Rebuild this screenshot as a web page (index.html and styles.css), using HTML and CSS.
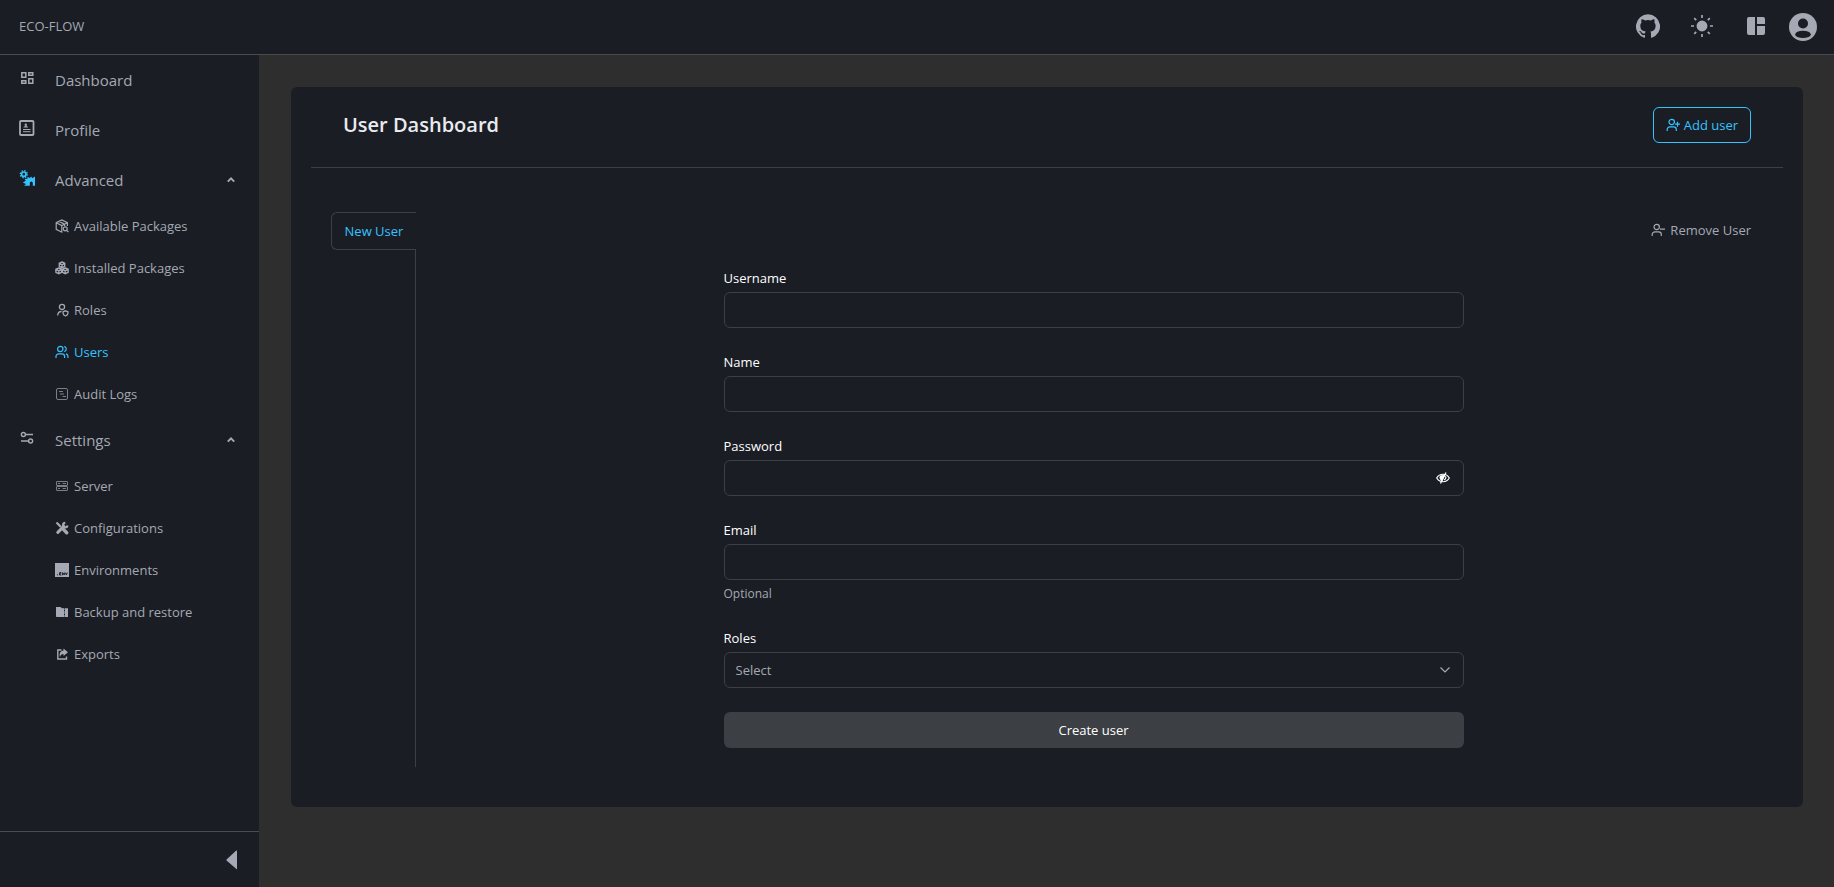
FILE: index.html
```html
<!DOCTYPE html>
<html lang="en">
<head>
<meta charset="utf-8">
<title>ECO-FLOW</title>
<link rel="stylesheet" href="styles.css">
</head>
<body>
<div class="app">
  <header class="topbar">
    <span class="brand">ECO-FLOW</span>
    <div class="tools">
      <a class="tool" href="#" aria-label="GitHub"><svg width="24" height="24" viewBox="0 0 24 24" fill="currentColor"><path d="M12 .3a12 12 0 0 0-3.8 23.4c.6.1.8-.3.8-.6v-2c-3.3.7-4-1.6-4-1.6-.6-1.4-1.400-1.800-1.400-1.800-1-.7.1-.7.1-.7 1.200 0 1.900 1.200 1.900 1.200 1 1.800 2.800 1.300 3.500 1 0-.8.4-1.300.7-1.600-2.700-.3-5.500-1.300-5.500-6 0-1.200.5-2.300 1.300-3.100-.2-.4-.6-1.600 0-3.200 0 0 1-.3 3.400 1.200a11.500 11.500 0 0 1 6 0c2.300-1.500 3.300-1.200 3.300-1.200.6 1.600.2 2.800 0 3.200.9.8 1.300 1.900 1.300 3.200 0 4.600-2.800 5.600-5.500 5.900.5.4.9 1 .9 2.200v3.300c0 .3.1.7.8.6A12 12 0 0 0 12 .3"/></svg></a>
      <button class="tool" type="button" aria-label="Theme"><svg width="24" height="24" viewBox="0 0 24 24" fill="currentColor" stroke="currentColor" stroke-width="1.700"><circle cx="12" cy="12" r="4.600"/><path d="M12 1v3M12 20v3M1 12h3M20 12h3M4.200 4.200l2 2M17.800 17.800l2 2M4.200 19.800l2-2M17.800 6.200l2-2"/></svg></button>
      <button class="tool" type="button" aria-label="Layout"><svg width="24" height="24" viewBox="0 0 24 24" fill="currentColor"><path d="M5 3h6v18H5a2 2 0 0 1-2-2V5a2 2 0 0 1 2-2zM13 3h6a2 2 0 0 1 2 2v5h-8zM13 12h8v7a2 2 0 0 1-2 2h-6z"/></svg></button>
      <button class="tool account" type="button" aria-label="Account"><svg width="28" height="28" viewBox="0 0 28 28"><circle cx="14" cy="14" r="14" fill="currentColor"/><circle cx="14" cy="10.500" r="5" class="cut"/><ellipse cx="14" cy="21.400" rx="7.800" ry="3.700" class="cut"/></svg></button>
    </div>
  </header>

  <div class="body">
    <aside class="sidebar">
      <nav class="nav">
        <a class="item" href="#"><svg class="lead" viewBox="0 0 16 16" fill="none" stroke="currentColor" stroke-width="1.500"><path d="M2.800 2.800h4v4.500h-4zM9.800 2.800h4v2.500h-4zM2.800 10.700h4v2.500h-4zM9.800 8.700h4v4.500h-4z"/></svg><span>Dashboard</span></a>
        <a class="item" href="#"><svg class="lead" viewBox="0 0 16 16" fill="none" stroke="currentColor"><rect x="1" y="1" width="13.500" height="14" rx="1" stroke-width="1.800"/><circle cx="6.800" cy="4.700" r="1.200" fill="currentColor" stroke="none"/><path d="M4.400 7.600c.4-2 4.400-2 4.800 0z" fill="currentColor" stroke="none"/><path d="M4 9.500h7.500M4 11.700h7.500"/></svg><span>Profile</span></a>
        <button class="item" type="button"><svg class="lead active" viewBox="0 0 16 16" fill="currentColor"><circle cx="4.800" cy="4.200" r="2.200" fill="none" stroke="currentColor" stroke-width="1.700"/><circle cx="4.800" cy="4.200" r="3.500" fill="none" stroke="currentColor" stroke-width="1.400" stroke-dasharray="1.400 1.350"/><path d="M8.500 6.800 10.800 8 12.200 6.500l1 1.800L16 6.500V15.800h-2.200v-2.700a1.500 1.500 0 0 0-3 0v2.700H5l2-1.800-3.200-1.500 3-1.700-1.300-1.900 3-.2z"/></svg><span>Advanced</span><svg class="caret" viewBox="0 0 10 10"><path d="M1.800 6.600 5 3.400l3.200 3.200" fill="none" stroke="currentColor" stroke-width="2"/></svg></button>
        <a class="sub" href="#"><svg viewBox="0 0 14 14" fill="none" stroke="currentColor" stroke-width="1.200"><path d="M7.500 13 6.800 13.200 1.200 10.300V3.700L6.800 1l5.600 2.700V7M1.200 3.700 6.800 6.500l5.600-2.800M6.800 6.500v6.700M4 2.400l5.600 2.800v2"/><circle cx="10.200" cy="9.800" r="2"/><path d="m11.700 11.300 1.800 1.900"/></svg><span>Available Packages</span></a>
        <a class="sub" href="#"><svg viewBox="0 0 14 14" fill="none" stroke="currentColor" stroke-width="1.400"><path d="M7 1 9.700 2.300v3L7 6.700 4.300 5.300v-3zM3.800 7l2.700 1.300v3l-2.700 1.400-2.900-1.400v-3zM10.200 7l2.900 1.300v3l-2.900 1.400-2.700-1.400v-3zM4.300 2.500 7 3.800l2.700-1.300M7 3.800v2.700M1 8.500l2.800 1.300 2.700-1.300M3.800 9.800v2.700M7.500 8.500l2.700 1.300L13 8.500M10.200 9.800v2.700"/></svg><span>Installed Packages</span></a>
        <a class="sub" href="#"><svg viewBox="0 0 14 14" fill="none" stroke="currentColor" stroke-width="1.300"><circle cx="7" cy="3.900" r="2.600"/><path d="M2.700 12.500c0-2.600 1.300-4 3.800-4"/><path d="m10.500 7.800 2.400.9v1.500c0 1.400-1 2.200-2.400 2.800-1.400-.6-2.400-1.400-2.400-2.800V8.700z"/></svg><span>Roles</span></a>
        <a class="sub active" href="#"><svg viewBox="0 0 14 14" fill="none" stroke="currentColor" stroke-width="1.200"><circle cx="5.300" cy="4" r="2.700"/><path d="M1 13v-1.500A2.700 2.700 0 0 1 3.700 8.800h3.200a2.700 2.700 0 0 1 2.700 2.700V13M9.300 1.400a2.700 2.700 0 0 1 0 5.200M13 13v-1.500c0-1.300-.8-2.300-2-2.600"/></svg><span>Users</span></a>
        <a class="sub" href="#"><svg class="thin" viewBox="0 0 14 14" fill="none" stroke="currentColor"><rect x="1.500" y="1.500" width="11" height="11" rx="1.500"/><path d="M4 4.500h4M5 7h4M7.500 9.500h3.500"/></svg><span>Audit Logs</span></a>
        <button class="item" type="button"><svg class="lead" viewBox="0 0 16 16" fill="none" stroke="currentColor" stroke-width="1.400"><circle cx="4.400" cy="4.500" r="2"/><path d="M6.500 4.500H14M2 11h7.500"/><circle cx="11.600" cy="11" r="2"/></svg><span>Settings</span><svg class="caret" viewBox="0 0 10 10"><path d="M1.800 6.600 5 3.400l3.200 3.200" fill="none" stroke="currentColor" stroke-width="2"/></svg></button>
        <a class="sub" href="#"><svg class="thin" viewBox="0 0 14 14" fill="none" stroke="currentColor"><rect x="1.500" y="2.500" width="11" height="4" rx=".5"/><rect x="1.500" y="7.500" width="11" height="4" rx=".5"/><path d="M3 4.500h2M7.500 4.500h3.500M3 9.500h2M7.500 9.500h3.500"/></svg><span>Server</span></a>
        <a class="sub" href="#"><svg viewBox="0 0 14 14" fill="none" stroke="currentColor"><path d="m1.500 1.500 4.500 4.500" stroke-width="2.200"/><path d="m8.400 8.400 3.300 3.300" stroke-width="3.400" stroke-linecap="round"/><path d="m2.800 11.400 6-6" stroke-width="3" stroke-linecap="round"/><path d="M10.300 1.800a2.300 2.300 0 1 0 2.300 2.800" stroke-width="2.200"/></svg><span>Configurations</span></a>
        <a class="sub" href="#"><svg viewBox="0 0 14 14"><path d="M0 0h14v14H0z" fill="currentColor"/><path d="M2 11.800h1M6.300 9.600H4.600v2.400h1.700M4.600 10.800h1.500M7.600 12.200V9.700l1.700 2.300V9.600M10.500 9.600l.9 2.400.9-2.400" fill="none" class="cut-line"/></svg><span>Environments</span></a>
        <a class="sub" href="#"><svg viewBox="0 0 14 14"><path d="M1 2h4.500L7 3.300h2V12H1.500L1 11.500zM10 3.300h3V12h-3z" fill="currentColor"/><path d="M8 3.500h2V5H8zM9 6h1.500v3H9zM8 10h2v2H8z" fill="currentColor" opacity=".6"/></svg><span>Backup and restore</span></a>
        <a class="sub" href="#"><svg viewBox="0 0 14 14"><path d="M6.500 3H2.800v9h8.700V9.500" fill="none" stroke="currentColor" stroke-width="1.400"/><path d="M8.500 1.500 13 5.300 8.500 9.100V7c-2 0-3 .9-3.500 3-.9-3.600.3-6.200 3.500-6.500z" fill="currentColor"/></svg><span>Exports</span></a>
      </nav>
      <div class="side-foot">
        <button class="collapse" type="button" aria-label="Collapse sidebar"><svg width="12" height="20" viewBox="0 0 12 20"><path d="M11 .5v19L.8 10.800a1 1 0 0 1 0-1.500L10 .8z" fill="currentColor"/></svg></button>
      </div>
    </aside>

    <main class="main">
      <section class="card">
        <div class="card-head">
          <h1 class="title">User Dashboard</h1>
          <button class="add" type="button"><svg width="14" height="14" viewBox="0 0 14 14" fill="none" stroke="currentColor" stroke-width="1.200"><circle cx="5.700" cy="4" r="2.700"/><path d="M1.200 13v-1.500a2.700 2.700 0 0 1 2.700-2.700h3.700a2.700 2.700 0 0 1 2.700 2.700V13M9 6.200h5M11.500 3.700v5"/></svg><span>Add user</span></button>
        </div>
        <div class="card-body">
          <div class="tabs">
            <button class="tab" type="button">New User</button>
            <div class="tab-line"></div>
          </div>
          <div class="panel">
            <button class="remove" type="button"><svg width="14" height="14" viewBox="0 0 14 14" fill="none" stroke="currentColor" stroke-width="1.200"><circle cx="5.700" cy="4" r="2.700"/><path d="M1.200 13v-1.500a2.700 2.700 0 0 1 2.700-2.700h3.700a2.700 2.700 0 0 1 2.700 2.700V13M9 6.200h5"/></svg><span>Remove User</span></button>
            <form class="form">
              <div class="field"><label for="username">Username</label><input id="username" class="control" type="text"></div>
              <div class="field"><label for="name">Name</label><input id="name" class="control" type="text"></div>
              <div class="field"><label for="password">Password</label>
                <div class="wrap"><input id="password" class="control" type="password"><button class="eye" type="button" aria-label="Show password"><svg width="14" height="14" viewBox="0 0 14 14" fill="none" stroke="currentColor" stroke-width="1.200"><path d="M.7 7C3.500 2 10.500 2 13.300 7 10.500 12 3.500 12 .7 7z"/><path d="M8.800 3.200 5 11" stroke-width="1.500"/><path d="M4.500 5 8 4.500 5.500 9.500 4 7z" fill="currentColor"/><path d="M9.500 5.300c.8 1.600 0 3-1.500 3.600M10 1.500 4.500 12.500"/></svg></button></div>
              </div>
              <div class="field"><label for="email">Email</label><input id="email" class="control" type="email"><span class="help">Optional</span></div>
              <div class="field"><label for="roles">Roles</label>
                <div class="wrap"><select id="roles" class="control select"><option>Select</option></select><svg class="chevron" width="12" height="12" viewBox="0 0 12 12"><path d="m1.500 3.500 4.500 4.500 4.500-4.500" fill="none" stroke="currentColor" stroke-width="1.200"/></svg></div>
              </div>
              <button class="create" type="submit">Create user</button>
            </form>
          </div>
        </div>
      </section>
    </main>
  </div>
</div>
</body>
</html>
```
FILE: styles.css
```css
* { box-sizing: border-box; }

body {
  margin: 0;
  background: #2e2e2e;
  color: #a4a9b3;
  font: 14px/20px "Segoe UI", "Open Sans", "Noto Sans", sans-serif;
}

button, input, select { font: inherit; color: inherit; }
button { background: none; border: 0; padding: 0; cursor: pointer; }
a { color: inherit; text-decoration: none; }
svg { display: block; flex: none; }

.app { min-height: 100vh; display: flex; flex-direction: column; }

.topbar {
  display: flex;
  align-items: center;
  justify-content: space-between;
  height: 55px;
  padding: 0 17px 2px 19px;
  background: #1a1d24;
  border-bottom: 1px solid #4b4b4d;
}
.brand { font-size: 13px; }
.tools { display: flex; align-items: center; gap: 30px; }
.account { margin-left: -9px; padding-top: 2px; }
.cut { fill: #1a1d24; }
.cut-line { stroke: #1a1d24; }

.body { flex: 1; display: flex; }

.sidebar {
  width: 259px;
  flex: none;
  display: flex;
  flex-direction: column;
  background: #1a1d24;
}
.nav { flex: 1; display: flex; flex-direction: column; }
.item {
  display: flex;
  align-items: center;
  height: 50px;
  padding: 0 23px 0 19px;
  font-size: 15px;
  text-align: left;
}
.item span { flex: 1; }
.lead { width: 16px; height: 16px; margin: 0 20px 4px 0; }
.caret { width: 10px; height: 10px; }
.sub {
  display: flex;
  align-items: center;
  gap: 5px;
  height: 42px;
  padding-left: 55px;
  font-size: 13px;
}
.sub svg { width: 14px; height: 14px; }
.thin { opacity: .7; }
.active { color: #34c3ff; }

.side-foot {
  display: flex;
  align-items: center;
  justify-content: flex-end;
  height: 56px;
  padding-right: 21px;
  border-top: 1px solid #4b4b4d;
}

.main { flex: 1; min-width: 0; padding: 32px 31px 32px 32px; }
.card { padding: 20px 20px 40px; background: #1a1d24; border-radius: 6px; }
.card-head {
  display: flex;
  align-items: center;
  justify-content: space-between;
  padding: 0 32px 24px;
  border-bottom: 1px solid #3c3f43;
}
.title { margin: 0; font-size: 20px; line-height: 32px; font-weight: 600; color: #e9ebf0; }
.add {
  display: flex;
  align-items: center;
  gap: 4px;
  height: 36px;
  padding: 0 12px;
  border: 1px solid #34c3ff;
  border-radius: 6px;
  color: #34c3ff;
  font-size: 13px;
}

.card-body { display: flex; padding: 44px 20px 0; }
.tabs { display: flex; flex-direction: column; }
.tab {
  width: 85px;
  height: 38px;
  border: 1px solid #3c3f43;
  border-right: 0;
  border-radius: 6px 0 0 6px;
  color: #34c3ff;
  font-size: 13px;
}
.tab-line { flex: 1; border-right: 1px solid #3c3f43; }

.panel {
  flex: 1;
  display: flex;
  flex-direction: column;
  align-items: center;
  padding: 0 0 19px 8px;
}
.remove {
  display: flex;
  align-items: center;
  align-self: flex-end;
  gap: 5px;
  height: 36px;
  margin-bottom: 20px;
  padding-right: 12px;
  font-size: 13px;
}
.form {
  display: flex;
  flex-direction: column;
  gap: 24px;
  width: 100%;
  max-width: 740px;
  color: #fff;
  font-size: 13px;
}
.field { display: flex; flex-direction: column; gap: 4px; }
.control {
  width: 100%;
  height: 36px;
  padding: 0 11px;
  background: #1a1d24;
  border: 1px solid #3c3f43;
  border-radius: 6px;
}
.wrap { position: relative; }
.eye { position: absolute; right: 14px; top: 11px; }
.help { color: #a4a9b3; font-size: 12px; }
.select { appearance: none; color: #a4a9b3; }
.chevron { position: absolute; right: 13px; top: 12px; color: #a4a9b3; }
.create { height: 36px; background: #3c3f43; border-radius: 6px; color: #fff; }
```
